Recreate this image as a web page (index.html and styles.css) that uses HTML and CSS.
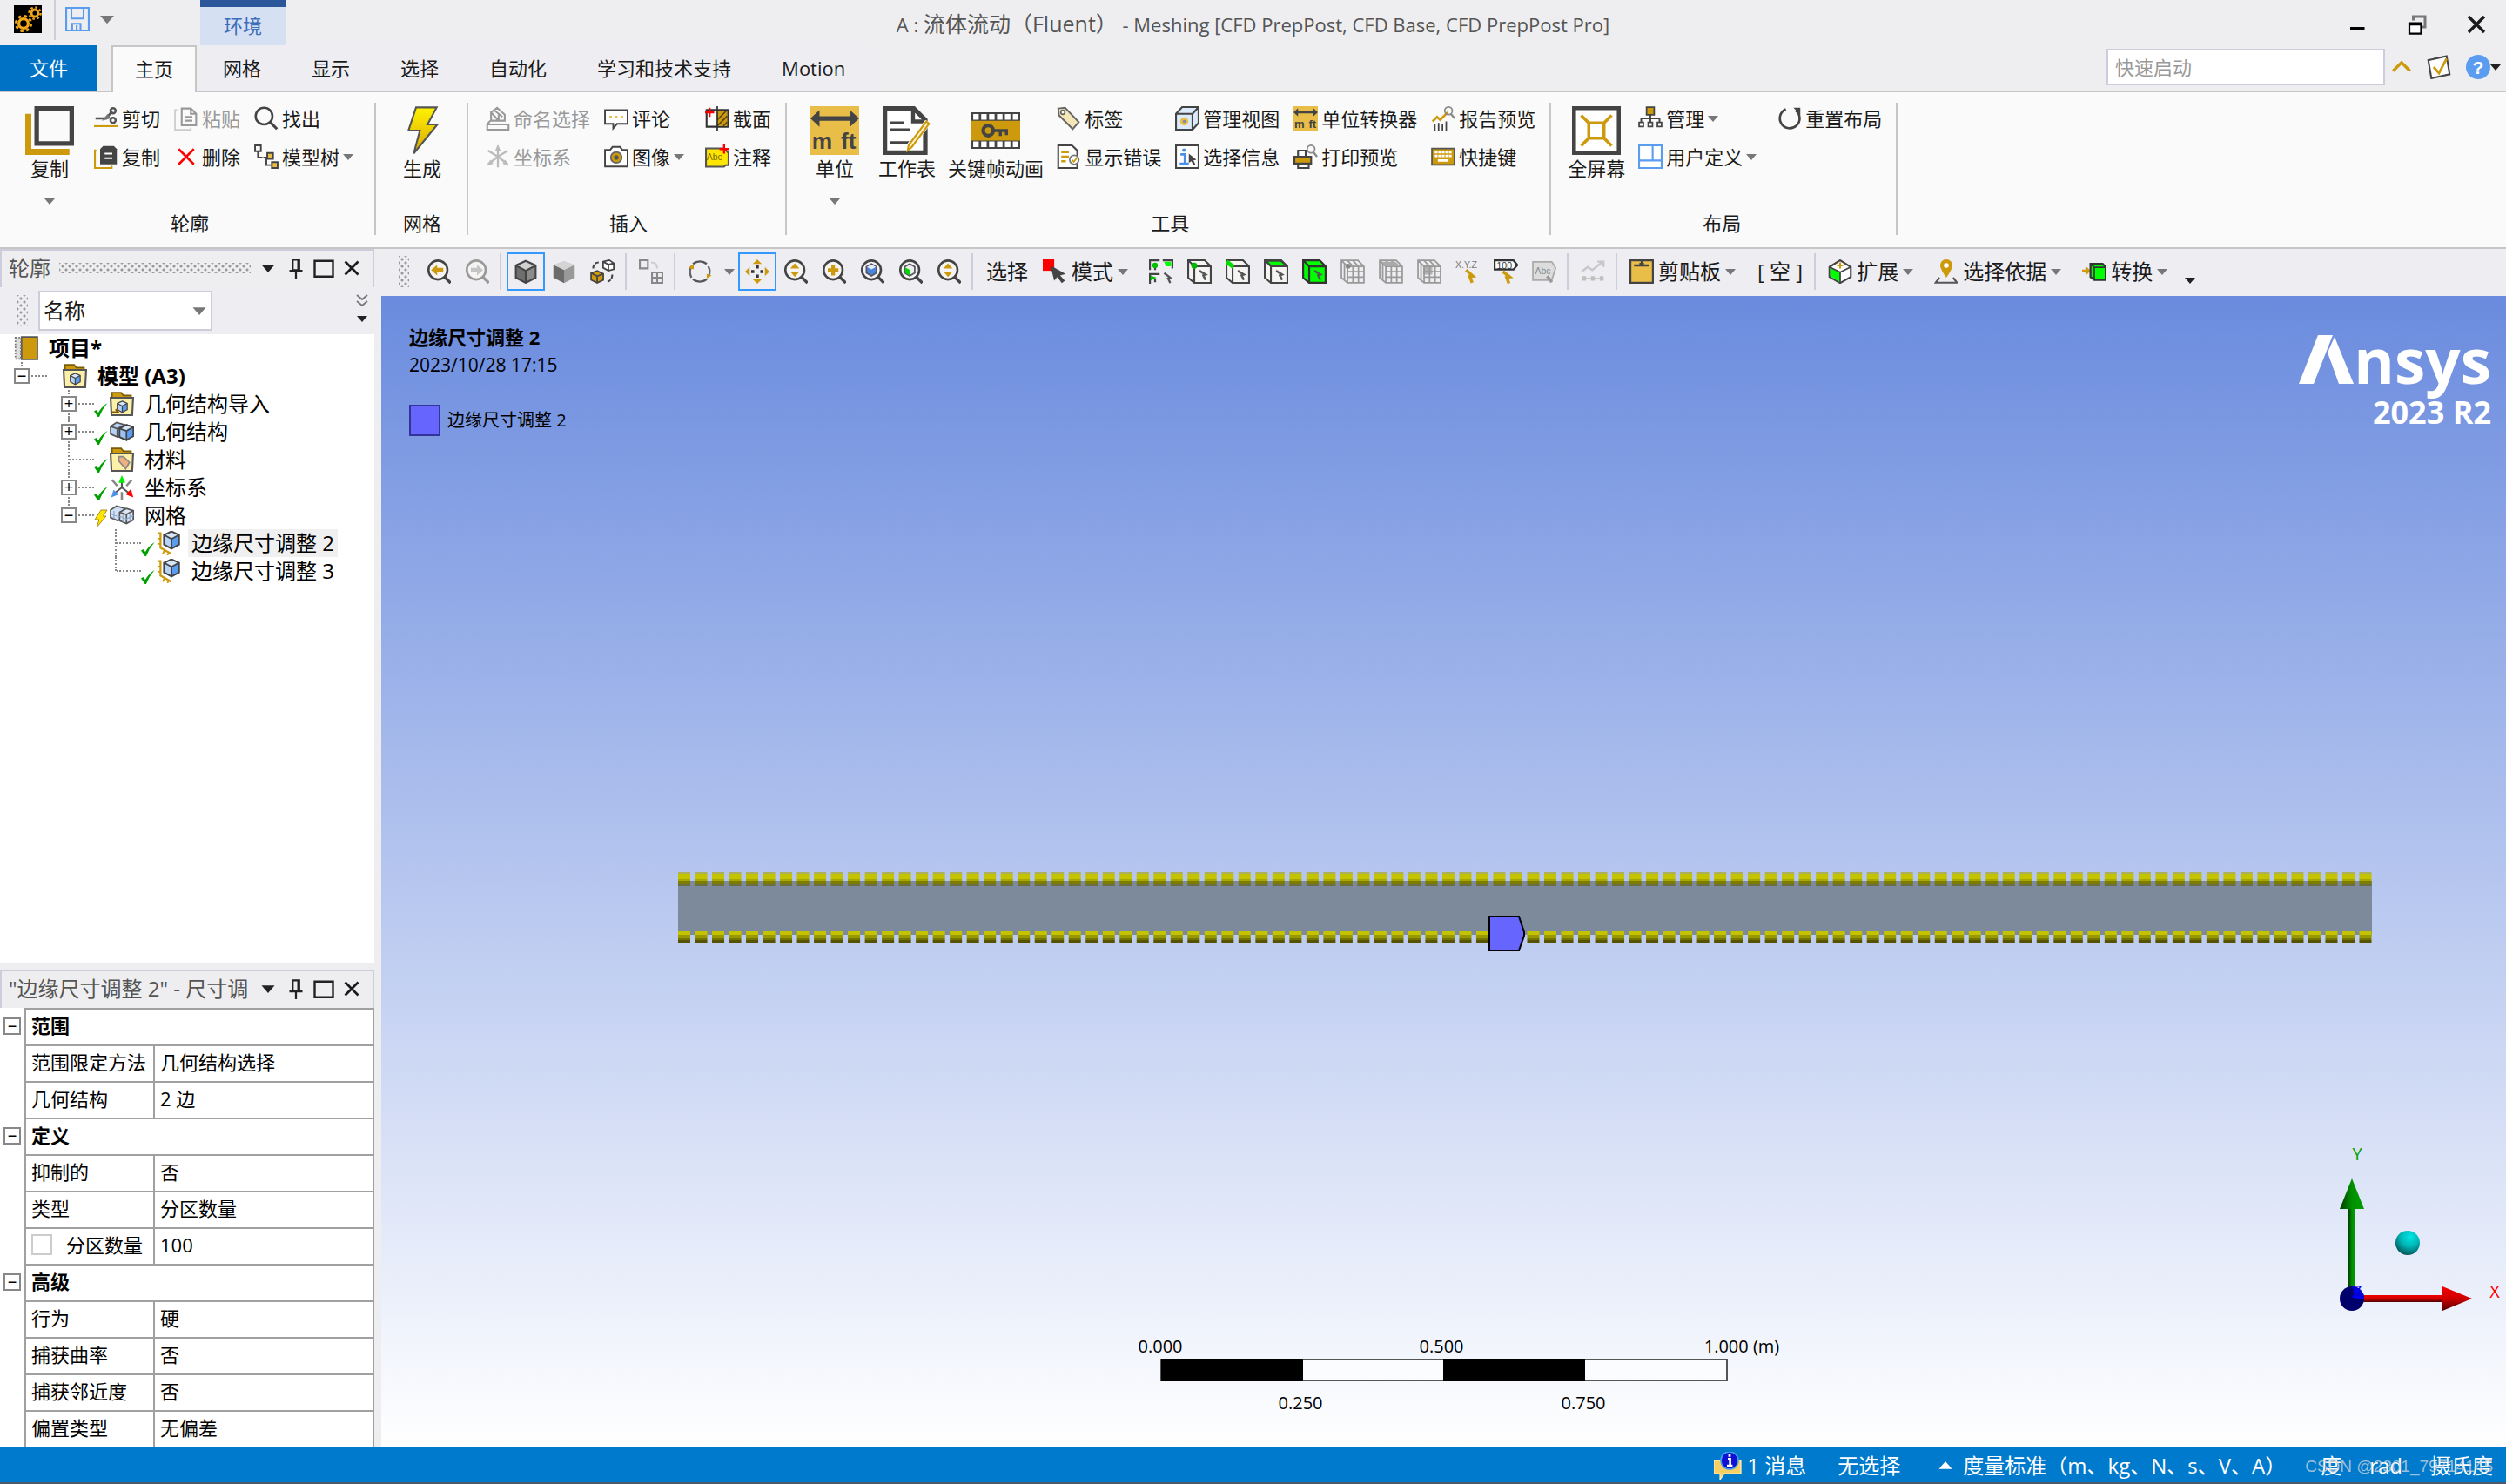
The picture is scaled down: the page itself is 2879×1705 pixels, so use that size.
FILE: index.html
```html
<!DOCTYPE html>
<html lang="zh-CN">
<head>
    <meta charset="UTF-8">
    <meta name="viewport" content="width=device-width, initial-scale=1.0">
    <title>A : 流体流动（Fluent） - Meshing</title>
    <link rel="stylesheet" href="styles.css">
</head>
<body>
    <!-- Shared gradients -->
    <svg class="gradients" aria-hidden="true">
        <defs>
            <linearGradient id="bolt-fill" x1="0" y1="0" x2="0" y2="1"><stop offset="0" stop-color="#fff200"/><stop offset="1" stop-color="#d9a800"/></linearGradient>
            <radialGradient id="ball-cyan" cx=".6" cy=".25" r=".8"><stop offset="0" stop-color="#00e6e6"/><stop offset=".5" stop-color="#00b4b4"/><stop offset="1" stop-color="#004c50"/></radialGradient>
            <linearGradient id="cone-green"><stop offset="0" stop-color="#003c00"/><stop offset=".5" stop-color="#009000"/><stop offset="1" stop-color="#00a000"/></linearGradient>
            <linearGradient id="cone-red" x1="0" y1="0" x2="0" y2="1"><stop offset="0" stop-color="#f00000"/><stop offset=".5" stop-color="#d00000"/><stop offset="1" stop-color="#500000"/></linearGradient>
        </defs>
    </svg>

    <!-- Icon sprite -->
    <svg class="sprite" aria-hidden="true">
        <symbol id="caret" viewBox="0 0 12 8"><path d="M0 1h12L6 8z" fill="currentColor"/></symbol>
        <symbol id="app" viewBox="0 0 16 16"><path d="M0 0h16v16H0z"/><g fill="none" stroke="#f0a818"><circle cx="5.500" cy="10.500" r="2.700" stroke-width="1.600"/><circle cx="5.500" cy="10.500" r="4.300" stroke-width="1.500" stroke-dasharray="1.700 1.700"/><circle cx="12" cy="4.500" r="2" stroke-width="1.400"/><circle cx="12" cy="4.500" r="3.300" stroke-width="1.200" stroke-dasharray="1.300 1.300"/></g></symbol>
        <symbol id="save" viewBox="0 0 16 16"><path d="M.6.600h14.800v14.800H.6zM4 .6v7h8v-7M4.500 15.400v-4.400h5.500v4.400M7.500 12v3.400" fill="none" stroke="#5a9cf0" stroke-width="1.200"/></symbol>
        <symbol id="copy-big" viewBox="0 0 32 32"><path d="M0 5h4v23h25v4H0z" fill="#cc9a0c"/><path d="M9 2h21v22H9z" fill="#fafafa"/><path d="M6 0h26v26H6zM9 3v20h20V3z" fill="#444" fill-rule="evenodd"/></symbol>
        <symbol id="cut" viewBox="0 0 16 16"><path d="M0 12.500h16v1.200H0z" fill="#cc9a0c"/><g fill="none" stroke="#555" stroke-width="1.400"><circle cx="12.500" cy="3" r="1.700"/><circle cx="12.500" cy="9.300" r="1.700"/><path d="M1 8h7l3.500-4M8 8l4-5"/></g><path d="M5 9.500L9 5l2 3z" fill="#777"/></symbol>
        <symbol id="copy" viewBox="0 0 16 16"><path d="M1.500 4H.5v11.500h11V14" fill="none" stroke="#cc9a0c" stroke-width="1.400"/><path d="M6 1h7l2 2v10H4V3z" fill="#444"/><path d="M7 6h5M7 9h5" stroke="#fff" stroke-width="1.200"/></symbol>
        <symbol id="paste" viewBox="0 0 16 16"><path d="M2 2.500H.6v13H11V14" fill="none" stroke="#ccc"/><path d="M5 1.500h6l3.500 3.500v7.500H5zM11 1.500V5h3.500M7 7h5M7 9.500h5" fill="none" stroke="#999" stroke-width="1.200"/></symbol>
        <symbol id="delete" viewBox="0 0 16 16"><path d="M3 3l10 10M13 3L3 13" stroke="#f00" stroke-width="1.500"/></symbol>
        <symbol id="find" viewBox="0 0 16 16"><circle cx="6.500" cy="6.500" r="5.500" fill="none" stroke="#444" stroke-width="1.500"/><path d="M10.500 10.500l4.500 4.500" stroke="#444" stroke-width="1.800"/></symbol>
        <symbol id="tree" viewBox="0 0 16 16"><path d="M.6.600h3.800v3.800H.6zM2.500 4.500v4h3M6 8.500h2.500M8 8.500v5h3" fill="none" stroke="#444" stroke-width="1.100"/><path d="M8.600 5.600h3.800v3.800H8.600zM11.600 11.600h3.800v3.800h-3.800z" fill="#e8be48" stroke="#444" stroke-width="1.100"/></symbol>
        <symbol id="bolt" viewBox="0 0 32 32"><path d="M12 .8h13.500L19.500 12H26L10.500 31l4-15H7z" fill="url(#bolt-fill)" stroke="#555" stroke-width="1.200"/></symbol>
        <symbol id="named" viewBox="0 0 16 16"><path d="M3.500 4l4-3 5 4.500v4h-4zM3.500 4v5.500h5V5.500M6 3l5 4M1 12h14v3.400H1zM3 9.500L1 12" fill="none" stroke="#999" stroke-width="1.200"/></symbol>
        <symbol id="csys-grey" viewBox="0 0 16 16"><path d="M8 1v14M8 8L1.500 4M8 8l6.500-4M8 8l-6.500 5M8 8l6.500 5" stroke="#bbb" stroke-width="1.300"/><path d="M8 0l1.800 4H6.200zM1 14l2-4 2 2.500zM15 14l-2-4-2 2.500z" fill="#bbb"/></symbol>
        <symbol id="comment" viewBox="0 0 16 16"><path d="M.6 2.600h14.800v9H8.500L6 14.500v-2.900H.6z" fill="#fff" stroke="#444" stroke-width="1.100"/><path d="M3.500 7h1.600M7.200 7h1.600M10.900 7h1.600" stroke="#e8be48" stroke-width="1.300"/></symbol>
        <symbol id="camera" viewBox="0 0 16 16"><path d="M.6 3.600h3.400L5.500 1.600h5L12 3.600h3.400v10.800H.6z" fill="#fff" stroke="#444" stroke-width="1.100"/><circle cx="8" cy="8.500" r="3.600" fill="#cc9a0c" stroke="#666"/><circle cx="8" cy="8.500" r="1.500" fill="#555"/></symbol>
        <symbol id="section" viewBox="0 0 16 16"><path d="M1 2.500h14v11H1z" fill="#fff" stroke="#333" stroke-width="1.200"/><path d="M8 3h6.500v10H8z" fill="#cc9a0c"/><path d="M8 9l6-6M8 13l6.500-6.500M12 13l2.500-2.500" stroke="#5b4408"/><path d="M8 0v16" stroke="#333"/><path d="M0 4h6M3 1v6" stroke="#f00" stroke-width="1.300"/></symbol>
        <symbol id="note" viewBox="0 0 16 16"><path d="M.6 2.600h12l2.800 3v8h-2l-1 1H.6z" fill="#ffe600" stroke="#555" stroke-width="1.200"/><text x="1" y="10.500" class="ico-text" font-size="6" fill="#7a6c00">Abc</text><path d="M9.500 3h6M12.500 0v6" stroke="#f00" stroke-width="1.300"/></symbol>
        <symbol id="units" viewBox="0 0 32 32"><path d="M0 0h32v32H0z" fill="#e8be48"/><path d="M0 8l6-5.500V6.500h20v-4L32 8l-6 5.500v-4H6v4z" fill="#444"/><text x="1" y="28" class="ico-text" font-size="15" font-weight="bold" fill="#444">m</text><text x="20" y="28" class="ico-text" font-size="15" font-weight="bold" fill="#444">ft</text></symbol>
        <symbol id="worksheet" viewBox="0 0 32 32"><path d="M1.500 1.500h19L28 9v21.500H1.500z" fill="#fff" stroke="#444" stroke-width="3"/><path d="M20 1v9h9" fill="none" stroke="#444" stroke-width="2.500"/><path d="M5 11h9M5 15.500h13M5 24h13" stroke="#444" stroke-width="2"/><path d="M32 11l-4-2-12 16-.5 5 4-2z" fill="#fafafa"/><path d="M30.500 11.500L19 27l-2.500 2 .6-3.400L28.700 10z" fill="#fff3d0" stroke="#cc9a0c" stroke-width="1.200"/></symbol>
        <symbol id="film" viewBox="0 0 32 32"><path d="M0 4h32v24H0z" fill="#444"/><path d="M0 9.500h32v13H0z" fill="#cc9a0c"/><path d="M1.200 7h30M1.200 25h30" stroke="#fff" stroke-width="3.600" stroke-dasharray="3.600 1.600"/><circle cx="11" cy="16" r="3.300" fill="none" stroke="#444" stroke-width="2.400"/><path d="M14 16h10M19 16v3.500M23 16v3" stroke="#444" stroke-width="2"/></symbol>
        <symbol id="tag" viewBox="0 0 16 16"><path d="M1 1.500L5.500 1l9 9.500-4 4.500L1.500 6z" fill="#f5e6b8" stroke="#666" stroke-width="1.100"/><circle cx="4" cy="4" r="1.300" fill="#fff" stroke="#666"/></symbol>
        <symbol id="show-err" viewBox="0 0 16 16"><path d="M1 .6h9L13.500 4v11.400H1z" fill="#fff" stroke="#444" stroke-width="1.200"/><path d="M3 5h5M3 8h5M3 11h3" stroke="#cc9a0c" stroke-width="1.300"/><circle cx="11.500" cy="10" r="3" fill="#fff" stroke="#777"/><path d="M10 10l1.200 1.400L13.500 8.500" fill="none" stroke="#cc9a0c"/></symbol>
        <symbol id="views" viewBox="0 0 16 16"><path d="M.6 5l4-4.400h10.800V11l-4 4.400H.6z" fill="#dcebfb" stroke="#444" stroke-width="1.200"/><path d="M.6 5h10.800v10.400M11.400 5l4-4.400" fill="none" stroke="#444" stroke-width="1.200"/><circle cx="6" cy="10" r="2.700" fill="#e8be48"/><circle cx="6" cy="10" r="1" fill="#7a8aa8"/></symbol>
        <symbol id="info" viewBox="0 0 16 16"><path d="M.6.600h14.800v14.800H.6z" fill="#fff" stroke="#444" stroke-width="1.200"/><path d="M3.500 6.500h3v6M3 12.700h6" fill="none" stroke="#4a90e8" stroke-width="1.700"/><circle cx="5.800" cy="3.700" r="1.200" fill="#4a90e8"/><path d="M9 6l5 4-2 .4 1.300 2.600-1.300.600L10.700 11 9 12z" fill="#444"/></symbol>
        <symbol id="report" viewBox="0 0 16 16"><path d="M1 10l3-3 2 2 5-5" fill="none" stroke="#cc9a0c" stroke-width="1.500"/><path d="M2.500 16v-4M5 16v-5M7.500 16v-4M10 16v-6" stroke="#444"/><circle cx="11.500" cy="3" r="2.500" fill="none" stroke="#888"/><path d="M13 5l2.500 3" stroke="#888" stroke-width="1.300"/></symbol>
        <symbol id="print" viewBox="0 0 16 16"><path d="M3 8V4h5v4M3 12v3.400h7V12" fill="#fff" stroke="#444" stroke-width="1.200"/><path d="M.6 8h11v4.500H.6z" fill="#cc9a0c" stroke="#444" stroke-width="1.200"/><circle cx="11.500" cy="3" r="2.500" fill="none" stroke="#888"/><path d="M13 5l2.500 3" stroke="#888" stroke-width="1.300"/></symbol>
        <symbol id="keys" viewBox="0 0 16 16"><path d="M.6 2.600h14.800v10.800H.6z" fill="#cc9a0c" stroke="#555"/><path d="M2.500 5h11M2.500 7.500h11" stroke="#fff" stroke-width="1.600" stroke-dasharray="1.800 .5"/><path d="M4.500 10.500h7" stroke="#fff" stroke-width="1.600"/></symbol>
        <symbol id="fullscreen" viewBox="0 0 32 32"><path d="M1.300 1.300h29.400v29.400H1.300z" fill="#fff" stroke="#444" stroke-width="2.600"/><path d="M11 11h10v10H11zM6 6l5 5M26 6l-5 5M6 26l5-5M26 26l-5-5" fill="none" stroke="#cc9a0c" stroke-width="2"/></symbol>
        <symbol id="manage" viewBox="0 0 16 16"><path d="M8 5v3M2 11V8h12v3M8 8v3" fill="none" stroke="#444" stroke-width="1.100"/><path d="M5.500.600h5v5h-5z" fill="#cc9a0c" stroke="#444"/><path d="M.6 10.600h2.800v2.800H.6zM6.600 10.600h2.800v2.800H6.600zM12.600 10.600h2.800v2.800h-2.800z" fill="#fff" stroke="#444"/></symbol>
        <symbol id="userdef" viewBox="0 0 16 16"><path d="M.6.600h14.800v14.800H.6zM.6 10.500h14.800M9.500.600v9.900" fill="#fff" stroke="#5a9cf0" stroke-width="1.200"/></symbol>
        <symbol id="reset" viewBox="0 0 16 16"><path d="M5.500 2A6.500 6.500 0 1 0 12 2.800" fill="none" stroke="#444" stroke-width="1.500"/><path d="M10.500 1h4.500v4.500z" fill="#444"/></symbol>
        <symbol id="min" viewBox="0 0 16 16"><path d="M2 10h11v2.500H2z"/></symbol>
        <symbol id="restore" viewBox="0 0 16 16"><path d="M5 5V2h9v8h-3" fill="none" stroke="#777" stroke-width="2"/><path d="M2 7h9v8H2zM2 8h9" fill="#fff" stroke="#000" stroke-width="1.500"/></symbol>
        <symbol id="close" viewBox="0 0 16 16"><path d="M2 2l12 12M14 2L2 14" stroke="currentColor" stroke-width="2.200"/></symbol>
        <symbol id="chevron-up" viewBox="0 0 16 16"><path d="M1.500 11L8 4.500l6.500 6.500" fill="none" stroke="#cc9a0c" stroke-width="2.200"/></symbol>
        <symbol id="checkdoc" viewBox="0 0 16 16"><path d="M1 3.500L13 .8l2 12L3 15.400z" fill="#fff" stroke="#444" stroke-width="1.200"/><path d="M4.500 8l3.500 4 5-9.500" fill="none" stroke="#cc9a0c" stroke-width="1.600"/></symbol>
        <symbol id="help" viewBox="0 0 16 16"><circle cx="8" cy="8" r="8" fill="#5a9cf0"/><text x="4.300" y="12.300" class="ico-text" font-size="12" font-weight="bold" fill="#fff">?</text></symbol>
        <symbol id="pin" viewBox="0 0 16 16"><path d="M5.500 1.500h5v8h-5zM3 10h10M8 10v6" fill="none" stroke="#222" stroke-width="1.500"/><path d="M9 1.500h1.500v8H9z" fill="#222"/></symbol>
        <symbol id="square" viewBox="0 0 16 16"><path d="M1 2.500h14v12H1z" fill="none" stroke="#222" stroke-width="1.600"/></symbol>
        <symbol id="dbl-chevron" viewBox="0 0 16 16"><path d="M2 1l6 5 6-5M2 8l6 5 6-5" fill="none" stroke="#777" stroke-width="1.800"/></symbol>
        <symbol id="lens" viewBox="0 0 16 16"><circle cx="7.500" cy="7" r="6.200" fill="#f6f4f2" stroke="currentColor" stroke-width="1.500"/><path d="M11.800 11.500l4 4" stroke="currentColor" stroke-width="1.900"/></symbol>
        <symbol id="zoom-back" viewBox="0 0 16 16"><use href="#lens"/><path d="M3 7l4-3.500v2h4v3H7v2z" fill="#cc9a0c"/></symbol>
        <symbol id="zoom-fwd" viewBox="0 0 16 16"><use href="#lens"/><path d="M12 7L8 3.500v2H4v3h4v2z" fill="#c4c4c4"/></symbol>
        <symbol id="zoom-ud" viewBox="0 0 16 16"><use href="#lens"/><path d="M7.500 2.500l3 3.500h-6zM7.500 11.500l3-3.500h-6z" fill="#cc9a0c"/></symbol>
        <symbol id="zoom-in" viewBox="0 0 16 16"><use href="#lens"/><path d="M6.300 3.500h2.400v2.300h2.300v2.400H8.700v2.300H6.300V8.200H4V5.800h2.300z" fill="#cc9a0c"/></symbol>
        <symbol id="zoom-fit" viewBox="0 0 16 16"><use href="#lens"/><path d="M7.500 3l3.300 1.800v4L7.500 10.800 4.200 8.800v-4z" fill="#4a86d8" stroke="#556"/><path d="M4.500 5l3-1.600 3 1.600-3 1.600z" fill="#e6eefa"/></symbol>
        <symbol id="zoom-sel" viewBox="0 0 16 16"><use href="#lens"/><path d="M7.500 3l3.300 1.800v4L7.500 10.800 4.200 8.800v-4z" fill="#eee" stroke="#556"/><path d="M4.500 5.300l3 1.600v3.600l-3-1.700z" fill="#00d800"/></symbol>
        <symbol id="cube-edges" viewBox="0 0 16 16"><path d="M8 1l6.500 3v8L8 15.400 1.500 12V4z" fill="#8b8b8b"/><path d="M8 7.500L1.500 4v8L8 15.400z" fill="#6f6f6f"/><path d="M8 1l6.500 3L8 7.500 1.500 4z" fill="#d0d0d0"/><path d="M8 1l6.500 3v8L8 15.400 1.500 12V4zM1.500 4L8 7.500 14.500 4M8 7.500v8" fill="none" stroke="#444" stroke-width="1.200"/></symbol>
        <symbol id="cube-plain" viewBox="0 0 16 16"><path d="M8 6.500L15 3.500v8.500l-7 3.500z" fill="#999"/><path d="M8 6.500L1 3.500V12l7 3.500z" fill="#6b6b6b"/><path d="M8 1l7 2.500-7 3.500-7-3.500z" fill="#d4d4d4"/></symbol>
        <symbol id="cube-swap" viewBox="0 0 16 16"><path d="M8.500 1.500l4-1 3 2v4l-3.500 1-3.500-2zM8.500 1.500l3.500 2 3.500-1M12 3.500v4" fill="#fff" stroke="#444"/><path d="M.6 9l4-1.500 4 2v4l-4 1.900-4-2z" fill="#cc9a0c" stroke="#444"/><path d="M.6 9l4 2 4-1.500M4.600 11v4.400" fill="none" stroke="#444"/><path d="M2 6q0-4 4-4M14.500 10q0 4-4 5" fill="none" stroke="#444" stroke-width="1.200" stroke-dasharray="2.500 1"/></symbol>
        <symbol id="convert" viewBox="0 0 16 16"><path d="M.6.600h5.300v5.300H.6zM8.600 8.600h6.800v6.800H8.600zM12 8.600v6.800M8.600 12h6.800" fill="none" stroke="#888" stroke-width="1.200"/><path d="M8 2q4 0 4 4" fill="none" stroke="#ccc" stroke-width="1.200"/></symbol>
        <symbol id="rotate" viewBox="0 0 16 16"><path d="M3.500 3a7 7 0 0 1 9 0M12.500 13a7 7 0 0 1-9 0" fill="none" stroke="#555" stroke-width="1.400"/><path d="M2.500 4.500Q.5 8 2.500 12M13.500 11.500q2-3.500 0-7" fill="none" stroke="#666" stroke-width="1.300"/><path d="M.5 5.500L4 3v3.500zM15.800 10.500L12.500 9.500l0 3z" fill="#cc9a0c"/></symbol>
        <symbol id="pan" viewBox="0 0 16 16"><path d="M8 0l3 3H5zM8 16l3-3H5zM0 8l3-3v6zM16 8l-3-3v6z" fill="#cc9a0c"/><path d="M7 4h2v2H7zM7 10h2v2H7zM4 7h2v2H4zM10 7h2v2h-2z" fill="#333"/></symbol>
        <symbol id="mode" viewBox="0 0 16 16"><path d="M0 0h7.500v7.500H0z" fill="#f00"/><path d="M5 4l10 5.500-3.600 1L14.500 14l-2 1.500-3-4L7.500 14z" fill="#444"/></symbol>
        <symbol id="filter-all" viewBox="0 0 16 16"><path d="M.6 7V.6H7M9 .6h6.400V6M.6 16V9.600H7M4 4v3M4 13v2" fill="none" stroke="#444" stroke-width="1.300"/><circle cx="4" cy="4" r="1.800" fill="#00c000"/><path d="M10 1.500h4.500v3H11z" fill="#0f0"/><path d="M1 10.500l4 1.500-4 2z" fill="#00c000"/><path d="M10 9l4 3-1.500.500 1.500 3" fill="none" stroke="#555" stroke-width="1.300"/></symbol>
        <symbol id="box" viewBox="0 0 16 16"><path d="M.6.600h10.800l4 4v10.800H4.600L.6 12z" fill="#f6f4f2"/><path d="M.6.600h10.800l4 4v10.800H4.600L.6 12zM.6.600l4 4h10.800M4.600 4.600v10.800" fill="none" stroke="#444" stroke-width="1.200"/></symbol>
        <symbol id="tip" viewBox="0 0 16 16"><path d="M8 7.500l4 2.500-1.500.500 1.500 3" fill="none" stroke="#555" stroke-width="1.400"/></symbol>
        <symbol id="vertex" viewBox="0 0 16 16"><use href="#box"/><circle cx="4.600" cy="4.200" r="2" fill="#00b800"/><use href="#tip"/></symbol>
        <symbol id="edge" viewBox="0 0 16 16"><use href="#box"/><path d="M.6 1.500l4.600 3.500" stroke="#0d0" stroke-width="2.800"/><use href="#tip"/></symbol>
        <symbol id="face" viewBox="0 0 16 16"><use href="#box"/><path d="M1.500 1l3.300 3.400H15L11 1z" fill="#0f0" stroke="#444"/><use href="#tip"/></symbol>
        <symbol id="body" viewBox="0 0 16 16"><path d="M.6.600h10.800l4 4v10.800H4.600L.6 12z" fill="#0f0"/><path d="M.6.600h10.800l4 4v10.800H4.600L.6 12zM.6.600l4 4h10.800M4.600 4.600v10.800" fill="none" stroke="#333" stroke-width="1.300"/><use href="#tip"/></symbol>
        <symbol id="grid-box" viewBox="0 0 16 16"><path d="M.6.600h10.800l4 4v10.800H4.600L.6 12zM.6.600l4 4h10.800M4.600 4.600v10.800M8.200 4.600v10.800M11.800 4.600v10.800M4.600 8h10.800M4.600 11.700h10.800M2.600 2.600v11M4.500.600l3.700 4M8 .6l3.800 4" fill="#efedf0" stroke="#999"/></symbol>
        <symbol id="node" viewBox="0 0 16 16"><use href="#grid-box"/><circle cx="5" cy="4.500" r="1.600" fill="#888"/></symbol>
        <symbol id="elem-face" viewBox="0 0 16 16"><use href="#grid-box"/><path d="M2 1.500h9l3 3H5z" fill="#aaa"/></symbol>
        <symbol id="elem" viewBox="0 0 16 16"><use href="#grid-box"/><path d="M4 4h6v6H4z" fill="#999" opacity=".7"/></symbol>
        <symbol id="xyz" viewBox="0 0 16 16"><text x="0" y="5.500" class="ico-text" font-size="6" fill="#777">X.Y.Z</text><path d="M7 7l4.500 4-2 .3 1.500 4" fill="none" stroke="#cc9a0c" stroke-width="2"/></symbol>
        <symbol id="probe" viewBox="0 0 16 16"><path d="M.6.700H13l2.500 3-2.500 3H.6z" fill="#fff" stroke="#333" stroke-width="1.300"/><text x="2" y="6" class="ico-text" font-size="6" fill="#333">100</text><path d="M6 8l4.500 3.500-2 .3 1.500 4" fill="none" stroke="#cc9a0c" stroke-width="2"/></symbol>
        <symbol id="abc" viewBox="0 0 16 16"><path d="M.6 1.600h12.400l2.500 4-2.500 8H.6z" fill="#ddd" stroke="#aaa"/><text x="2" y="9.500" class="ico-text" font-size="6" fill="#888">Abc</text><path d="M10 11l3 4" stroke="#999" stroke-width="2"/></symbol>
        <symbol id="graph" viewBox="0 0 16 16"><path d="M.6 8l4-3 3 2L14 2M11 1.500h4V5" fill="none" stroke="#c8c8c8" stroke-width="1.300"/><path d="M1 12.500h14" stroke="#c8c8c8"/><path d="M1 11h2.500v3H1zM6.700 11h2.500v3H6.700zM12.500 11H15v3h-2.500z" fill="#c0c0c0"/></symbol>
        <symbol id="clip" viewBox="0 0 16 16"><path d="M.6.600h14.800v14.800H.6z" fill="#e8be48" stroke="#444" stroke-width="1.300"/><path d="M3 4h10M6.500 3h3M8 1v2" stroke="#444" stroke-width="1.300"/></symbol>
        <symbol id="extend" viewBox="0 0 16 16"><path d="M1 5L8 .6 15 5v6.500l-7 4-7-4z" fill="#fff" stroke="#444" stroke-width="1.200"/><path d="M1.500 5.500L8 8.500v6.500l-6.500-4z" fill="#0f0"/><path d="M1 5l7 3.500L15 5M8 8.500v7" fill="none" stroke="#444"/><path d="M6 4h4M8 2v4" stroke="#cc9a0c" stroke-width="1.200"/></symbol>
        <symbol id="place" viewBox="0 0 16 16"><path d="M8 0a4 4 0 0 1 4 4.500Q11.500 7 8 12 4.500 7 4 4.500A4 4 0 0 1 8 0z" fill="#cc9a0c"/><circle cx="8" cy="4" r="1.600" fill="#fff"/><path d="M3.500 12L1 15.300h14L12.500 12" fill="none" stroke="#555" stroke-width="1.200"/></symbol>
        <symbol id="to-body" viewBox="0 0 16 16"><path d="M0 7.500h3.500M2.500 5.500l2 2-2 2" fill="none" stroke="#cc9a0c" stroke-width="1.500"/><path d="M5.500 3h8l2 2v8.500H8L5.500 11.500z" fill="#0f0" stroke="#333" stroke-width="1.300"/><path d="M5.500 3L8 5.200h7.500M8 5.200v8.300" fill="none" stroke="#333"/></symbol>
        <symbol id="book" viewBox="0 0 16 16"><path d="M5 .6h10.400v14.800H5z" fill="#cc9a0c" stroke="#555"/><path d="M1 1h3.500v14H1z" fill="#ddd" stroke="#777" stroke-dasharray="1 1"/></symbol>
        <symbol id="mini-cube" viewBox="0 0 16 16"><path d="M8 2l5.500 2.500v7L8 14.500l-5.500-3v-7z" fill="#5a9cf0"/><path d="M8 7.500L2.500 4.500v7l5.500 3z" fill="#b6d2f6"/><path d="M8 2l5.500 2.500-5.500 3-5.500-3z" fill="#d6e6fa"/><path d="M8 2l5.500 2.500v7L8 14.500l-5.500-3v-7zM2.500 4.500l5.500 3 5.500-3M8 7.500v7" fill="none" stroke="#444" stroke-width="1.200"/></symbol>
        <symbol id="folder" viewBox="0 0 16 16"><path d="M1.500.600h6L9 2.500h5v2h-12.500z" fill="#cc9a0c" stroke="#7a5c08"/><path d="M.6 4h14.800l-.6 11.400H1.200z" fill="#fdf0a8" stroke="#555" stroke-width="1.200"/></symbol>
        <symbol id="model" viewBox="0 0 16 16"><use href="#folder"/><use href="#mini-cube" x="3.500" y="5" width="9.500" height="9.500"/></symbol>
        <symbol id="import" viewBox="0 0 16 16"><use href="#folder"/><use href="#mini-cube" x="3.500" y="5" width="9.500" height="9.500"/><path d="M1.500 13.500h4l-1.500-2" fill="none" stroke="#8a5a00" stroke-width="1.300"/></symbol>
        <symbol id="material" viewBox="0 0 16 16"><use href="#folder"/><path d="M6 6h3l4 4-2.500 4L6 9z" fill="#f0b080" stroke="#888"/></symbol>
        <symbol id="geometry" viewBox="0 0 16 16"><path d="M.6 4.500L4.500 2 10 3.500v6l-5 2L.6 9.500z" fill="#b6d2f6" stroke="#555"/><path d="M.6 4.500L5 6l5-2.500M5 6v5.500" fill="none" stroke="#555"/><path d="M6.500 6L11 3.500l4.500 1.500v6L11 13.500l-4.500-2z" fill="#5a9cf0" stroke="#444"/><path d="M6.500 6L11 3.500 15.500 5 11 7.500z" fill="#d6e6fa" stroke="#444"/><path d="M6.500 6L11 7.500v6l-4.500-2z" fill="#9cc2f4" stroke="#444"/></symbol>
        <symbol id="mesh" viewBox="0 0 16 16"><path d="M.6 4.500L4.500 2 10 3.500v6l-5 2L.6 9.500z" fill="#cfe0f7" stroke="#555"/><path d="M6.500 6L11 3.500l4.500 1.500v6L11 13.500l-4.500-2z" fill="#dbe8fa" stroke="#555"/><path d="M6.500 6L11 7.500 15.500 5M11 7.500v6" fill="none" stroke="#555"/><path d="M8.700 6.800v5.600M13.300 6.300v5.900M6.500 8.700l4.500 1.800 4.500-2.300M2.800 5.200v5.200M.6 7L5 8.700" fill="none" stroke="#8fa8cc" stroke-width=".7"/></symbol>
        <symbol id="csys" viewBox="0 0 16 16"><path d="M8 8V3M8 8l-5 4M8 8l5 4" stroke="#555" stroke-width="1.200"/><path d="M8 0l2.200 5H5.800z" fill="#0e0"/><path d="M1 14.500l1.500-5L6 12.500z" fill="#4a90e8"/><path d="M15.500 14.500l-5-2L14 9z" fill="#f00"/><path d="M1.500 3l3.500 4M14.500 3L11 7M8 11v5" stroke="#888" stroke-width="1.500"/></symbol>
        <symbol id="sizing" viewBox="0 0 16 16"><path d="M.5 1.500h2v9.500l7 4" fill="none" stroke="#cc9a0c" stroke-width="1.300"/><path d="M.5 5h2M.5 8.500h2M5 13l-1 2M8 14.300L7 16" stroke="#cc9a0c"/><use href="#mini-cube" x="2.500" y="-1.500" width="14.500" height="14.500"/></symbol>
        <symbol id="check" viewBox="0 0 16 16"><path d="M0 9.500l2.500-1.500 2.500 3Q9 4 15.500 0 9.500 7 6 16H4.500z" fill="#00a000"/></symbol>
        <symbol id="bolt-sm" viewBox="0 0 16 22"><path d="M8 1h7l-4.500 7H14L3 21l3-9H1z" fill="#ffe600" stroke="#a88a20"/></symbol>
        <symbol id="msg" viewBox="0 0 16 16"><path d="M0 5h15.500v7.500H6L3.500 16v-3.500H0z" fill="#f8cf62" stroke="#fff3c0" stroke-width=".6"/><circle cx="9" cy="5" r="5" fill="#1010d0" stroke="#40a0f0" stroke-width=".8"/><path d="M8 4.200h1.300v4M7.500 8h3.200M8.300 2.200h1.400" fill="none" stroke="#fff" stroke-width="1.300"/></symbol>
    </svg>

    <!-- Title bar -->
    <header class="titlebar">
        <svg class="app-icon"><use href="#app"/></svg>
        <span class="title-sep"></span>
        <button class="icon-btn" aria-label="保存"><svg class="icon"><use href="#save"/></svg></button>
        <button class="icon-btn quick-more" aria-label="自定义"><svg class="caret"><use href="#caret"/></svg></button>
        <div class="context-tab">环境</div>
        <h1 class="window-title">A : <span class="project-name">流体流动（Fluent）</span> - Meshing [CFD PrepPost, CFD Base, CFD PrepPost Pro]</h1>
        <div class="window-buttons">
            <button class="icon-btn" aria-label="最小化"><svg class="icon-sm"><use href="#min"/></svg></button>
            <button class="icon-btn" aria-label="还原"><svg class="icon-sm"><use href="#restore"/></svg></button>
            <button class="icon-btn" aria-label="关闭"><svg class="icon-sm"><use href="#close"/></svg></button>
        </div>
    </header>

    <!-- Ribbon tabs -->
    <nav class="tabs">
        <button class="tab tab-file">文件</button>
        <button class="tab active">主页</button>
        <button class="tab">网格</button>
        <button class="tab">显示</button>
        <button class="tab">选择</button>
        <button class="tab">自动化</button>
        <button class="tab">学习和技术支持</button>
        <button class="tab">Motion</button>
        <div class="tabs-right">
            <input class="search" type="text" placeholder="快速启动" aria-label="快速启动">
            <button class="icon-btn" aria-label="折叠"><svg class="icon-sm"><use href="#chevron-up"/></svg></button>
            <button class="icon-btn" aria-label="选项"><svg class="icon"><use href="#checkdoc"/></svg></button>
            <button class="icon-btn" aria-label="帮助"><svg class="icon"><use href="#help"/></svg><svg class="caret dark"><use href="#caret"/></svg></button>
        </div>
    </nav>

    <!-- Ribbon -->
    <section class="ribbon">
        <div class="group group-outline">
            <div class="group-body">
                <button class="big drop"><svg><use href="#copy-big"/></svg>复制<svg class="caret"><use href="#caret"/></svg></button>
                <div class="cols">
                    <div class="col">
                        <button class="small"><svg class="icon"><use href="#cut"/></svg>剪切</button>
                        <button class="small"><svg class="icon"><use href="#copy"/></svg>复制</button>
                    </div>
                    <div class="col">
                        <button class="small" disabled><svg class="icon"><use href="#paste"/></svg>粘贴</button>
                        <button class="small"><svg class="icon"><use href="#delete"/></svg>删除</button>
                    </div>
                    <div class="col">
                        <button class="small"><svg class="icon"><use href="#find"/></svg>找出</button>
                        <button class="small drop"><svg class="icon"><use href="#tree"/></svg>模型树<svg class="caret"><use href="#caret"/></svg></button>
                    </div>
                </div>
            </div>
            <div class="group-name">轮廓</div>
        </div>
        <div class="group group-mesh">
            <div class="group-body">
                <button class="big"><svg><use href="#bolt"/></svg>生成</button>
            </div>
            <div class="group-name">网格</div>
        </div>
        <div class="group">
            <div class="group-body">
                <div class="cols first">
                    <div class="col">
                        <button class="small" disabled><svg class="icon"><use href="#named"/></svg>命名选择</button>
                        <button class="small" disabled><svg class="icon"><use href="#csys-grey"/></svg>坐标系</button>
                    </div>
                    <div class="col">
                        <button class="small"><svg class="icon"><use href="#comment"/></svg>评论</button>
                        <button class="small drop"><svg class="icon"><use href="#camera"/></svg>图像<svg class="caret"><use href="#caret"/></svg></button>
                    </div>
                    <div class="col">
                        <button class="small"><svg class="icon"><use href="#section"/></svg>截面</button>
                        <button class="small"><svg class="icon"><use href="#note"/></svg>注释</button>
                    </div>
                </div>
            </div>
            <div class="group-name">插入</div>
        </div>
        <div class="group">
            <div class="group-body">
                <button class="big drop"><svg><use href="#units"/></svg>单位<svg class="caret"><use href="#caret"/></svg></button>
                <button class="big"><svg><use href="#worksheet"/></svg>工作表</button>
                <button class="big"><svg><use href="#film"/></svg>关键帧动画</button>
                <div class="cols">
                    <div class="col">
                        <button class="small"><svg class="icon"><use href="#tag"/></svg>标签</button>
                        <button class="small"><svg class="icon"><use href="#show-err"/></svg>显示错误</button>
                    </div>
                    <div class="col">
                        <button class="small"><svg class="icon"><use href="#views"/></svg>管理视图</button>
                        <button class="small"><svg class="icon"><use href="#info"/></svg>选择信息</button>
                    </div>
                    <div class="col">
                        <button class="small"><svg class="icon"><use href="#units"/></svg>单位转换器</button>
                        <button class="small"><svg class="icon"><use href="#print"/></svg>打印预览</button>
                    </div>
                    <div class="col">
                        <button class="small"><svg class="icon"><use href="#report"/></svg>报告预览</button>
                        <button class="small"><svg class="icon"><use href="#keys"/></svg>快捷键</button>
                    </div>
                </div>
            </div>
            <div class="group-name">工具</div>
        </div>
        <div class="group group-layout">
            <div class="group-body">
                <button class="big"><svg><use href="#fullscreen"/></svg>全屏幕</button>
                <div class="cols">
                    <div class="col">
                        <button class="small drop"><svg class="icon"><use href="#manage"/></svg>管理<svg class="caret"><use href="#caret"/></svg></button>
                        <button class="small drop"><svg class="icon"><use href="#userdef"/></svg>用户定义<svg class="caret"><use href="#caret"/></svg></button>
                    </div>
                    <div class="col">
                        <button class="small"><svg class="icon"><use href="#reset"/></svg>重置布局</button>
                    </div>
                </div>
            </div>
            <div class="group-name">布局</div>
        </div>
    </section>

    <div class="workspace">
        <!-- Left panels -->
        <aside class="sidebar">
            <section class="panel panel-outline">
                <div class="panel-title">
                    <h2>轮廓</h2>
                    <span class="grip-h"></span>
                    <button class="icon-btn" aria-label="菜单"><svg class="caret-lg"><use href="#caret"/></svg></button>
                    <button class="icon-btn" aria-label="固定"><svg class="icon-sm"><use href="#pin"/></svg></button>
                    <button class="icon-btn" aria-label="最大化"><svg class="icon-sm"><use href="#square"/></svg></button>
                    <button class="icon-btn" aria-label="关闭"><svg class="icon-xs"><use href="#close"/></svg></button>
                </div>
                <div class="panel-tools">
                    <span class="grip"></span>
                    <div class="select-wrap">
                        <select aria-label="名称"><option>名称</option></select>
                        <svg class="caret-lg"><use href="#caret"/></svg>
                    </div>
                    <div class="overflow">
                        <svg class="chevrons"><use href="#dbl-chevron"/></svg>
                        <svg class="caret dark"><use href="#caret"/></svg>
                    </div>
                </div>
                <ul class="tree">
                    <li>
                        <div class="node root"><svg class="icon"><use href="#book"/></svg><span class="node-name">项目*</span></div>
                        <ul>
                            <li>
                                <div class="node root"><button class="toggle" aria-label="折叠">−</button><i class="dots"></i><i class="state"></i><svg class="icon"><use href="#model"/></svg><span class="node-name">模型 (A3)</span></div>
                                <ul>
                                    <li><div class="node"><button class="toggle" aria-label="展开">+</button><i class="dots"></i><svg class="state"><use href="#check"/></svg><svg class="icon"><use href="#import"/></svg><span class="node-name">几何结构导入</span></div></li>
                                    <li><div class="node"><button class="toggle" aria-label="展开">+</button><i class="dots"></i><svg class="state"><use href="#check"/></svg><svg class="icon"><use href="#geometry"/></svg><span class="node-name">几何结构</span></div></li>
                                    <li><div class="node"><i class="dots leaf"></i><svg class="state"><use href="#check"/></svg><svg class="icon"><use href="#material"/></svg><span class="node-name">材料</span></div></li>
                                    <li><div class="node"><button class="toggle" aria-label="展开">+</button><i class="dots"></i><svg class="state"><use href="#check"/></svg><svg class="icon"><use href="#csys"/></svg><span class="node-name">坐标系</span></div></li>
                                    <li>
                                        <div class="node"><button class="toggle" aria-label="折叠">−</button><i class="dots"></i><svg class="state bolt"><use href="#bolt-sm"/></svg><svg class="icon"><use href="#mesh"/></svg><span class="node-name">网格</span></div>
                                        <ul>
                                            <li><div class="node"><i class="dots leaf"></i><svg class="state"><use href="#check"/></svg><svg class="icon"><use href="#sizing"/></svg><span class="node-name selected">边缘尺寸调整 2</span></div></li>
                                            <li><div class="node"><i class="dots leaf"></i><svg class="state"><use href="#check"/></svg><svg class="icon"><use href="#sizing"/></svg><span class="node-name">边缘尺寸调整 3</span></div></li>
                                        </ul>
                                    </li>
                                </ul>
                            </li>
                        </ul>
                    </li>
                </ul>
            </section>

            <section class="panel">
                <div class="panel-title">
                    <h2>"边缘尺寸调整 2" - 尺寸调</h2>
                    <button class="icon-btn" aria-label="菜单"><svg class="caret-lg"><use href="#caret"/></svg></button>
                    <button class="icon-btn" aria-label="固定"><svg class="icon-sm"><use href="#pin"/></svg></button>
                    <button class="icon-btn" aria-label="最大化"><svg class="icon-sm"><use href="#square"/></svg></button>
                    <button class="icon-btn" aria-label="关闭"><svg class="icon-xs"><use href="#close"/></svg></button>
                </div>
                <table class="details">
                    <colgroup><col class="c-gutter"><col class="c-name"><col></colgroup>
                    <tr><td class="gutter"><button class="toggle" aria-label="折叠">−</button></td><th colspan="2">范围</th></tr>
                    <tr><td class="gutter"></td><td>范围限定方法</td><td>几何结构选择</td></tr>
                    <tr><td class="gutter"></td><td>几何结构</td><td>2 边</td></tr>
                    <tr><td class="gutter"><button class="toggle" aria-label="折叠">−</button></td><th colspan="2">定义</th></tr>
                    <tr><td class="gutter"></td><td>抑制的</td><td>否</td></tr>
                    <tr><td class="gutter"></td><td>类型</td><td>分区数量</td></tr>
                    <tr><td class="gutter"></td><td><label class="param"><input type="checkbox">分区数量</label></td><td>100</td></tr>
                    <tr><td class="gutter"><button class="toggle" aria-label="折叠">−</button></td><th colspan="2">高级</th></tr>
                    <tr><td class="gutter"></td><td>行为</td><td>硬</td></tr>
                    <tr><td class="gutter"></td><td>捕获曲率</td><td>否</td></tr>
                    <tr><td class="gutter"></td><td>捕获邻近度</td><td>否</td></tr>
                    <tr><td class="gutter"></td><td>偏置类型</td><td>无偏差</td></tr>
                </table>
            </section>
        </aside>

        <!-- Graphics area -->
        <main class="main">
            <div class="toolbar">
                <span class="grip"></span>
                <button class="tool" aria-label="上一视图"><svg class="icon"><use href="#zoom-back"/></svg></button>
                <button class="tool off" aria-label="下一视图"><svg class="icon"><use href="#zoom-fwd"/></svg></button>
                <span class="sep"></span>
                <button class="tool on" aria-label="带边着色"><svg class="icon"><use href="#cube-edges"/></svg></button>
                <button class="tool" aria-label="着色"><svg class="icon"><use href="#cube-plain"/></svg></button>
                <button class="tool" aria-label="切换"><svg class="icon"><use href="#cube-swap"/></svg></button>
                <span class="sep"></span>
                <button class="tool" aria-label="视口"><svg class="icon"><use href="#convert"/></svg></button>
                <span class="sep"></span>
                <button class="tool" aria-label="旋转"><svg class="icon"><use href="#rotate"/></svg></button>
                <button class="tool-more" aria-label="旋转选项"><svg class="caret"><use href="#caret"/></svg></button>
                <button class="tool on" aria-label="平移"><svg class="icon"><use href="#pan"/></svg></button>
                <button class="tool" aria-label="缩放"><svg class="icon"><use href="#zoom-ud"/></svg></button>
                <button class="tool" aria-label="框选缩放"><svg class="icon"><use href="#zoom-in"/></svg></button>
                <button class="tool" aria-label="缩放至合适"><svg class="icon"><use href="#zoom-fit"/></svg></button>
                <button class="tool" aria-label="缩放至选择"><svg class="icon"><use href="#zoom-sel"/></svg></button>
                <button class="tool" aria-label="放大镜"><svg class="icon"><use href="#zoom-ud"/></svg></button>
                <span class="sep"></span>
                <span class="tool-label">选择</span>
                <button class="tool-drop"><svg class="icon"><use href="#mode"/></svg>模式<svg class="caret"><use href="#caret"/></svg></button>
                <button class="tool" aria-label="智能选择"><svg class="icon"><use href="#filter-all"/></svg></button>
                <button class="tool" aria-label="顶点"><svg class="icon"><use href="#vertex"/></svg></button>
                <button class="tool" aria-label="边"><svg class="icon"><use href="#edge"/></svg></button>
                <button class="tool" aria-label="面"><svg class="icon"><use href="#face"/></svg></button>
                <button class="tool" aria-label="体"><svg class="icon"><use href="#body"/></svg></button>
                <button class="tool" aria-label="节点"><svg class="icon"><use href="#node"/></svg></button>
                <button class="tool" aria-label="单元面"><svg class="icon"><use href="#elem-face"/></svg></button>
                <button class="tool" aria-label="单元"><svg class="icon"><use href="#elem"/></svg></button>
                <button class="tool" aria-label="坐标"><svg class="icon"><use href="#xyz"/></svg></button>
                <button class="tool" aria-label="探针"><svg class="icon"><use href="#probe"/></svg></button>
                <button class="tool" aria-label="标注"><svg class="icon"><use href="#abc"/></svg></button>
                <span class="sep"></span>
                <button class="tool" aria-label="图表"><svg class="icon"><use href="#graph"/></svg></button>
                <span class="sep"></span>
                <button class="tool-drop"><svg class="icon"><use href="#clip"/></svg>剪贴板<svg class="caret"><use href="#caret"/></svg></button>
                <span class="tool-label">[ 空 ]</span>
                <span class="sep"></span>
                <button class="tool-drop"><svg class="icon"><use href="#extend"/></svg>扩展<svg class="caret"><use href="#caret"/></svg></button>
                <button class="tool-drop"><svg class="icon"><use href="#place"/></svg>选择依据<svg class="caret"><use href="#caret"/></svg></button>
                <button class="tool-drop"><svg class="icon"><use href="#to-body"/></svg>转换<svg class="caret"><use href="#caret"/></svg></button>
                <svg class="caret dark toolbar-end"><use href="#caret"/></svg>
            </div>

            <div class="viewport">
                <svg class="scene" viewBox="0 0 2441 1322">
                    <!-- fluid domain with sized edges -->
                    <rect x="341" y="672" width="1946" height="62" fill="#7c8a9b"/>
                    <g class="edge-dashes">
                        <path d="M341 663h1946" stroke="#acb05c" stroke-width="2"/>
                        <path d="M341 667h1946" stroke="#c3c300" stroke-width="6"/>
                        <path d="M341 671h1946" stroke="#a8a800" stroke-width="2"/>
                        <path d="M341 674h1946" stroke="#7c7c00" stroke-width="4"/>
                        <path d="M341 677h1946" stroke="#6c6d40" stroke-width="2"/>
                        <path d="M341 732h1946" stroke="#c3c300" stroke-width="4"/>
                        <path d="M341 736h1946" stroke="#989800" stroke-width="4"/>
                        <path d="M341 739h1946" stroke="#747400" stroke-width="2"/>
                        <path d="M341 742h1946" stroke="#565200" stroke-width="4"/>
                    </g>
                    <path d="M1273 713h34l6 18v4l-6 17h-34z" fill="#6666ff" stroke="#000" stroke-width="2"/>

                    <!-- scale ruler -->
                    <path d="M896 1222h650v24H896z" fill="#fbfcff" stroke="#555" stroke-width="2"/>
                    <path d="M896 1221h163v26H896zM1220 1221h163v26h-163z"/>
                    <g class="scene-text" text-anchor="middle">
                        <text x="895" y="1214">0.000</text>
                        <text x="1218" y="1214">0.500</text>
                        <text x="1056" y="1279">0.250</text>
                        <text x="1381" y="1279">0.750</text>
                        <text x="1563" y="1214">1.000 (m)</text>
                    </g>

                    <!-- axis triad -->
                    <path d="M2260 1040h8v104h-8z" fill="url(#cone-green)"/>
                    <path d="M2264 1014l14 35h-28z" fill="url(#cone-green)"/>
                    <path d="M2274 1148h96v8h-96z" fill="url(#cone-red)"/>
                    <path d="M2368 1138l34 14-34 14z" fill="url(#cone-red)"/>
                    <circle cx="2264" cy="1152" r="14" fill="#00006c"/>
                    <path d="M2264 1138a14 14 0 0 1 14 14h-9z" fill="#0000d8"/>
                    <circle cx="2328" cy="1088" r="14" fill="url(#ball-cyan)"/>
                    <g class="axis-text" text-anchor="middle">
                        <text x="2270" y="993" fill="#00a000">Y</text>
                        <text x="2428" y="1151" fill="#f00">X</text>
                        <text x="2270" y="1151" fill="#00f">Z</text>
                    </g>
                </svg>

                <div class="annotation">
                    <div class="annotation-title">边缘尺寸调整 2</div>
                    <div class="annotation-date">2023/10/28 17:15</div>
                    <div class="legend"><span class="legend-color"></span>边缘尺寸调整 2</div>
                </div>

                <div class="brand">
                    <div class="brand-name">
                        <svg class="brand-mark" viewBox="0 0 63 56" role="img" aria-label="Ansys"><path d="M0 56L22 0h17L17 56zM41 2l22 54H46L33 20z" fill="#fff"/></svg>nsys
                    </div>
                    <div class="brand-release">2023 R2</div>
                </div>
            </div>
        </main>
    </div>

    <!-- Status bar -->
    <footer class="statusbar">
        <button class="status-item messages"><svg class="msg-icon"><use href="#msg"/></svg>1 消息</button>
        <span class="status-item">无选择</span>
        <button class="status-item units"><svg class="caret up"><use href="#caret"/></svg>度量标准（m、kg、N、s、V、A）</button>
        <span class="status-item">度</span>
        <span class="status-item">rad</span>
        <span class="status-item">摄氏度</span>
        <span class="watermark">CSDN @2301_79714145</span>
    </footer>
</body>
</html>
```
FILE: styles.css
```css
* {
    box-sizing: border-box;
}
body {
    margin: 0;
    height: 100vh;
    display: flex;
    flex-direction: column;
    overflow: hidden;
    background: #eeeef0;
    color: #1a1a1a;
    font-family: "Open Sans", "Noto Sans CJK SC", sans-serif;
    font-size: 22px;
    line-height: 32px;
}
button {
    padding: 0;
    border: none;
    background: none;
    color: inherit;
    font: inherit;
    white-space: nowrap;
}
svg {
    display: block;
    flex: none;
}
.gradients {
    position: absolute;
    width: 0;
    height: 0;
}
.sprite {
    display: none;
}
.ico-text {
    font-family: "Liberation Sans", sans-serif;
}
.icon {
    width: 28px;
    height: 28px;
}
.icon-sm {
    width: 24px;
    height: 24px;
}
.icon-xs {
    width: 20px;
    height: 20px;
}
.icon-btn {
    display: flex;
    align-items: center;
    justify-content: center;
}
.caret {
    width: 12px;
    height: 8px;
    color: #777;
}
.caret-lg {
    width: 16px;
    height: 10px;
    color: #222;
}
.dark {
    color: #222;
}

/* Title bar */
.titlebar {
    position: relative;
    display: flex;
    flex: none;
    height: 52px;
    padding-left: 16px;
}
.titlebar .app-icon {
    width: 32px;
    height: 32px;
    margin-top: 6px;
}
.title-sep {
    width: 2px;
    height: 46px;
    margin: 0 11px 0 14px;
    background: #ccccda;
}
.titlebar .icon-btn {
    height: 44px;
}
.quick-more {
    width: 40px;
}
.quick-more .caret {
    width: 16px;
    height: 12px;
}
.context-tab {
    width: 98px;
    margin-left: 87px;
    border-top: 8px solid #2b579a;
    background: #d5e0f2;
    color: #3c6db8;
    text-align: center;
    line-height: 42px;
}
.window-title {
    position: absolute;
    left: 0;
    right: 0;
    top: 0;
    margin: 0;
    color: #555;
    font-size: 22px;
    font-weight: normal;
    line-height: 54px;
    text-align: center;
    white-space: nowrap;
    pointer-events: none;
}
.project-name {
    font-size: 25px;
}
.window-buttons {
    display: flex;
    gap: 44px;
    margin-left: auto;
    padding: 6px 22px 0 0;
}

/* Tabs */
.tabs {
    display: flex;
    flex: none;
    height: 54px;
    border-bottom: 2px solid #c6c6c6;
}
.tab {
    height: 52px;
    margin-right: 2px;
    padding: 0 28px;
    background: #eeedf2;
}
.tab-file {
    width: 112px;
    margin-right: 16px;
    background: #0072c6;
    color: #fff;
}
.tab.active {
    height: 54px;
    padding: 0 25px 2px;
    border: 2px solid #c6c6c6;
    border-bottom: none;
    background: #fafafa;
}
.tabs-right {
    display: flex;
    align-items: center;
    gap: 17px;
    margin-left: auto;
    padding: 0 6px 2px 0;
}
.search {
    width: 320px;
    height: 42px;
    margin-right: -10px;
    padding: 0 8px;
    border: 2px solid #ccccdd;
    background: #fff;
    font: inherit;
}
.search::placeholder {
    color: #999;
}

/* Ribbon */
.ribbon {
    display: flex;
    flex: none;
    height: 180px;
    padding: 12px 0 14px;
    border-bottom: 2px solid #c6c6c6;
    background: #fafafa;
}
.group {
    display: flex;
    flex-direction: column;
    padding: 0 16px 0 20px;
    border-right: 2px solid #c6c6c6;
}
.group-outline {
    padding-left: 22px;
}
.group-mesh {
    padding: 0 16px 0 18px;
}
.group-layout {
    padding-left: 12px;
}
.group-body {
    display: flex;
    flex: 1;
}
.group-name {
    line-height: 24px;
    padding-bottom: 2px;
    text-align: center;
}
.big {
    display: flex;
    flex-direction: column;
    align-items: center;
    padding: 4px 7px 0;
    line-height: 30px;
}
.big > svg:first-child {
    width: 56px;
    height: 56px;
}
.big.drop {
    margin-right: 8px;
}
.big .caret {
    margin-top: 19px;
}
.cols {
    display: flex;
    gap: 16px;
    margin-left: 8px;
}
.cols.first {
    margin-left: 0;
}
.col {
    display: flex;
    flex-direction: column;
    align-items: flex-start;
    gap: 8px;
}
.small {
    display: flex;
    align-items: center;
    gap: 4px;
    height: 36px;
    padding-bottom: 1px;
}
.small.drop {
    padding-right: 8px;
}
.small:disabled {
    color: #999;
}

/* Workspace */
.workspace {
    display: flex;
    flex: 1;
    min-height: 0;
    gap: 8px;
}
.sidebar {
    display: flex;
    flex-direction: column;
    flex: none;
    gap: 8px;
    width: 430px;
}
.panel-outline {
    display: flex;
    flex: 1;
    flex-direction: column;
    min-height: 0;
}
.panel-title {
    display: flex;
    align-items: center;
    height: 44px;
    padding: 0 8px 2px;
    border: 2px solid #ccccda;
    border-bottom: none;
    background: #eeeef0;
}
.panel-title h2 {
    flex: 1;
    margin: 0;
    color: #555;
    font-size: 24px;
    font-weight: normal;
    white-space: nowrap;
    overflow: hidden;
}
.panel-outline .panel-title h2 {
    flex: none;
}
.panel-title .icon-btn {
    width: 32px;
    flex: none;
}
.grip-h {
    flex: 1;
    height: 12px;
    margin: 0 4px 0 10px;
}
.grip {
    width: 12px;
    height: 36px;
}
.grip,
.grip-h {
    background-image: radial-gradient(circle, #999 1px, transparent 2px), radial-gradient(circle, #999 1px, transparent 2px);
    background-size: 8px 8px;
    background-position: 0 0, 4px 4px;
}
.panel-tools {
    display: flex;
    align-items: center;
    height: 54px;
    padding: 0 6px 0 20px;
    background: #eeedf2;
}
.select-wrap {
    position: relative;
    width: 200px;
    margin-left: 12px;
}
.select-wrap select {
    width: 100%;
    height: 46px;
    padding: 0 4px;
    border: 2px solid #ccccda;
    border-radius: 0;
    background: #fff;
    color: #1a1a1a;
    font: inherit;
    font-size: 24px;
    appearance: none;
}
.select-wrap svg {
    position: absolute;
    right: 7px;
    top: 18px;
    color: #777;
    pointer-events: none;
}
.overflow {
    display: flex;
    flex-direction: column;
    align-items: center;
    gap: 8px;
    margin-left: auto;
    padding-bottom: 6px;
}
.chevrons {
    width: 16px;
    height: 16px;
}

/* Tree */
.tree {
    flex: 1;
    background: #fff;
    color: #000;
    font-size: 24px;
}
.tree,
.tree ul {
    margin: 0;
    padding: 0;
    list-style: none;
}
.tree > li {
    padding-left: 16px;
}
.tree li {
    position: relative;
}
.tree ul ul {
    padding-left: 54px;
}
.tree ul li::before {
    content: "";
    position: absolute;
    left: 8px;
    top: 0;
    bottom: 0;
    border-left: 2px dotted #888;
}
.tree ul li:last-child::before {
    bottom: auto;
    height: 16px;
}
.node {
    position: relative;
    display: flex;
    align-items: center;
    height: 32px;
    white-space: nowrap;
}
.node.root {
    font-weight: bold;
}
.node-name {
    margin-left: 8px;
    padding: 0 4px;
}
.node-name.selected {
    background: #f0f0f0;
}
.toggle {
    display: block;
    width: 18px;
    height: 18px;
    border: 2px solid #888;
    background: #fff;
    color: #000;
    font-family: "Liberation Sans", sans-serif;
    font-size: 18px;
    font-weight: normal;
    line-height: 14px;
}
.dots {
    width: 18px;
    margin-left: 2px;
    border-top: 2px dotted #888;
}
.dots.leaf {
    width: 28px;
    margin-left: 10px;
}
.state {
    width: 16px;
    height: 16px;
    margin: 14px 2px 0 0;
}
.state.bolt {
    height: 22px;
    margin-top: 8px;
}

/* Details table */
.details {
    width: 100%;
    border-spacing: 0;
    background: #fff;
    color: #000;
    table-layout: fixed;
}
.c-gutter {
    width: 28px;
}
.c-name {
    width: 148px;
}
.details td,
.details th {
    height: 42px;
    padding: 0 6px 4px;
    border: solid #a0a0a0;
    border-width: 2px 0 0 2px;
    text-align: left;
    white-space: nowrap;
}
.details td:last-child,
.details th {
    border-right-width: 2px;
}
.details .gutter {
    padding: 0 4px;
    border: none;
}
.details .toggle {
    width: 20px;
    height: 20px;
    line-height: 16px;
}
.param {
    display: flex;
    align-items: center;
    gap: 16px;
}
.param input {
    width: 24px;
    height: 24px;
    margin: 0;
    border: 2px solid #ccc;
    background: #fff;
    appearance: none;
}

/* Graphics toolbar */
.main {
    display: flex;
    flex: 1;
    flex-direction: column;
    min-width: 0;
}
.toolbar {
    display: flex;
    align-items: center;
    flex: none;
    height: 54px;
    padding: 0 0 2px 20px;
    background: #eeedf2;
    font-size: 24px;
}
.toolbar .grip {
    margin-right: 12px;
}
.tool {
    display: flex;
    align-items: center;
    justify-content: center;
    flex: none;
    width: 44px;
    height: 44px;
    color: #444;
}
.tool.on {
    border: 2px solid #3399ff;
}
.tool.off {
    color: #999;
}
.tool-more {
    width: 22px;
    padding-left: 6px;
}
.tool-label {
    padding: 0 9px;
}
.tool-drop {
    display: flex;
    align-items: center;
    gap: 5px;
    padding: 0 16px 0 8px;
}
.sep {
    flex: none;
    width: 2px;
    height: 42px;
    margin: 0 6px 0 4px;
    background: #ccccda;
}
.toolbar-end {
    margin: 20px 0 0 4px;
}

/* Viewport */
.viewport {
    position: relative;
    flex: 1;
    min-height: 0;
    background: linear-gradient(#6a8bde, #fff);
    color: #000;
}
.scene {
    width: 100%;
    height: 100%;
}
.edge-dashes {
    stroke-dasharray: 14 5.51;
}
.scene-text,
.axis-text {
    font-size: 20px;
}
.annotation {
    position: absolute;
    left: 32px;
    top: 31px;
}
.annotation-title {
    font-weight: bold;
}
.annotation-date {
    font-size: 21px;
}
.legend {
    display: flex;
    align-items: center;
    gap: 8px;
    margin-top: 30px;
    font-size: 20px;
}
.legend-color {
    width: 36px;
    height: 36px;
    border: 2px solid #333399;
    background: #6666ff;
}
.brand {
    position: absolute;
    right: 17px;
    top: 34px;
    color: #fff;
    font-weight: bold;
    text-align: right;
}
.brand-name {
    display: flex;
    align-items: baseline;
    font-size: 71px;
    line-height: 80px;
}
.brand-mark {
    width: 63px;
    height: 56px;
}
.brand-release {
    font-size: 36px;
    line-height: 40px;
}

/* Status bar */
.statusbar {
    position: relative;
    display: flex;
    flex: none;
    align-items: center;
    justify-content: flex-end;
    gap: 32px;
    height: 43px;
    padding-right: 15px;
    border-bottom: 2px solid #4a5a66;
    background: #007acc;
    color: #fff;
    font-size: 24px;
}
.status-item {
    display: flex;
    align-items: center;
    gap: 6px;
    padding-top: 2px;
    white-space: nowrap;
}
.status-item.messages {
    margin-right: 4px;
}
.status-item.units {
    gap: 12px;
    margin: 0 8px 0 12px;
}
.msg-icon {
    width: 32px;
    height: 32px;
}
.caret.up {
    width: 16px;
    height: 10px;
    color: #fff;
    transform: rotate(180deg);
}
.watermark {
    position: absolute;
    right: 15px;
    top: 7px;
    color: rgba(210, 215, 220, 0.75);
    font-family: "Liberation Sans", sans-serif;
    font-size: 19px;
}
```
